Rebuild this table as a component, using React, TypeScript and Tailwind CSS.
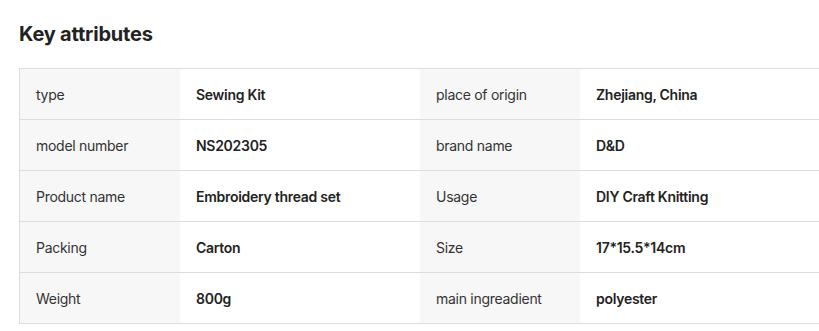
import React from 'react';

const rows: [string, string, string, string][] = [
  ['type', 'Sewing Kit', 'place of origin', 'Zhejiang, China'],
  ['model number', 'NS202305', 'brand name', 'D&D'],
  ['Product name', 'Embroidery thread set', 'Usage', 'DIY Craft Knitting'],
  ['Packing', 'Carton', 'Size', '17*15.5*14cm'],
  ['Weight', '800g', 'main ingreadient', 'polyester'],
];

export default function App() {
  return (
    <div className="w-[819px] h-[331px] overflow-hidden bg-white pl-[19px] pt-5 text-[#222]" style={{ fontFamily: 'Inter, "Noto Sans", sans-serif' }}>
      <h2 className="text-[20px] leading-[28px] font-bold tracking-[-0.01em] text-[#222]">Key attributes</h2>
      <div className="mt-5 w-[801px] border-l border-t border-[#dddddd]">
        {rows.map(([k1, v1, k2, v2]) => (
          <div key={k1} className="flex h-[51px] border-b border-[#dddddd] text-[14px] tracking-[-0.02em] pt-px">
            <div className="w-[160px] shrink-0 bg-[#f7f7f7] -mt-px flex items-center px-4 text-[#333]">{k1}</div>
            <div className="w-[240px] shrink-0 -mt-px flex items-center px-4 font-semibold text-[#222]">{v1}</div>
            <div className="w-[160px] shrink-0 bg-[#f7f7f7] -mt-px flex items-center px-4 text-[#333]">{k2}</div>
            <div className="w-[240px] shrink-0 -mt-px flex items-center px-4 font-semibold text-[#222]">{v2}</div>
          </div>
        ))}
      </div>
    </div>
  );
}
